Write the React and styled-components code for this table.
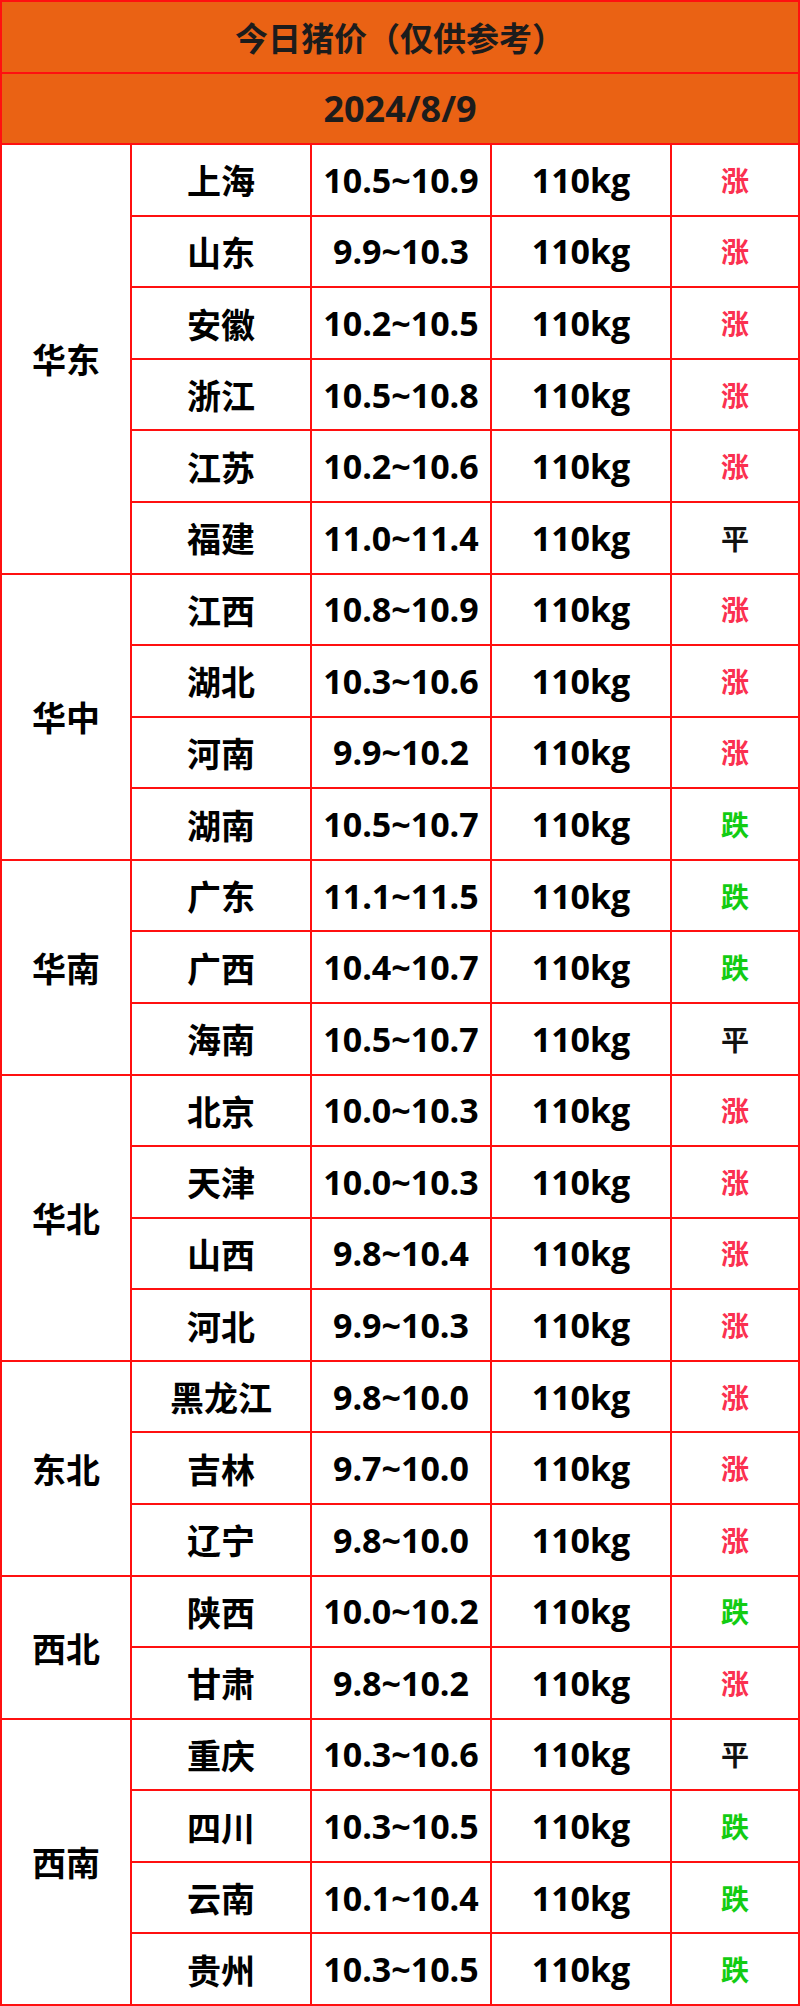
import React from 'react';
import styled, { createGlobalStyle } from 'styled-components';

const GlobalStyle = createGlobalStyle`
  html, body {
    margin: 0;
    padding: 0;
    background: #ffffff;
  }
`;

const data = [
  {
    region: '华东',
    rows: [
      ['上海', '10.5~10.9', 'up'],
      ['山东', '9.9~10.3', 'up'],
      ['安徽', '10.2~10.5', 'up'],
      ['浙江', '10.5~10.8', 'up'],
      ['江苏', '10.2~10.6', 'up'],
      ['福建', '11.0~11.4', 'flat'],
    ],
  },
  {
    region: '华中',
    rows: [
      ['江西', '10.8~10.9', 'up'],
      ['湖北', '10.3~10.6', 'up'],
      ['河南', '9.9~10.2', 'up'],
      ['湖南', '10.5~10.7', 'down'],
    ],
  },
  {
    region: '华南',
    rows: [
      ['广东', '11.1~11.5', 'down'],
      ['广西', '10.4~10.7', 'down'],
      ['海南', '10.5~10.7', 'flat'],
    ],
  },
  {
    region: '华北',
    rows: [
      ['北京', '10.0~10.3', 'up'],
      ['天津', '10.0~10.3', 'up'],
      ['山西', '9.8~10.4', 'up'],
      ['河北', '9.9~10.3', 'up'],
    ],
  },
  {
    region: '东北',
    rows: [
      ['黑龙江', '9.8~10.0', 'up'],
      ['吉林', '9.7~10.0', 'up'],
      ['辽宁', '9.8~10.0', 'up'],
    ],
  },
  {
    region: '西北',
    rows: [
      ['陕西', '10.0~10.2', 'down'],
      ['甘肃', '9.8~10.2', 'up'],
    ],
  },
  {
    region: '西南',
    rows: [
      ['重庆', '10.3~10.6', 'flat'],
      ['四川', '10.3~10.5', 'down'],
      ['云南', '10.1~10.4', 'down'],
      ['贵州', '10.3~10.5', 'down'],
    ],
  },
];

const trendText = { up: '涨', down: '跌', flat: '平' };
const trendColor = { up: '#fb3050', down: '#12cc12', flat: '#111111' };

const Table = styled.div`
  box-sizing: border-box;
  width: 800px;
  height: 2006px;
  padding: 2px;
  background: #ff1010;
  display: grid;
  grid-template-columns: 128px 178px 178px 178px 126px;
  grid-template-rows: repeat(28, 1fr);
  gap: 2px;
  font-family: "Open Sans", "Noto Sans CJK SC", sans-serif;
  font-weight: 700;
  color: #000000;
`;

const HeadCell = styled.div`
  grid-column: 1 / -1;
  background: #ea6214;
  color: #1c1c1c;
  display: flex;
  align-items: center;
  justify-content: center;
  font-size: ${(p) => p.size}px;
`;

const Cell = styled.div`
  background: #ffffff;
  display: flex;
  align-items: center;
  justify-content: center;
  font-size: 34px;
  white-space: nowrap;
`;

const RegionCell = styled(Cell)`
  grid-row: span ${(p) => p.span};
`;

const TrendCell = styled(Cell)`
  font-size: 28px;
  color: ${(p) => trendColor[p.trend]};
`;

export default function App() {
  return (
    <>
      <GlobalStyle />
      <Table>
        <HeadCell size={33}>今日猪价（仅供参考）</HeadCell>
        <HeadCell size={36}>2024/8/9</HeadCell>
        {data.map((group) => (
          <React.Fragment key={group.region}>
            <RegionCell span={group.rows.length}>{group.region}</RegionCell>
            {group.rows.map(([name, price, trend]) => (
              <React.Fragment key={name}>
                <Cell>{name}</Cell>
                <Cell>{price}</Cell>
                <Cell>110kg</Cell>
                <TrendCell trend={trend}>{trendText[trend]}</TrendCell>
              </React.Fragment>
            ))}
          </React.Fragment>
        ))}
      </Table>
    </>
  );
}
